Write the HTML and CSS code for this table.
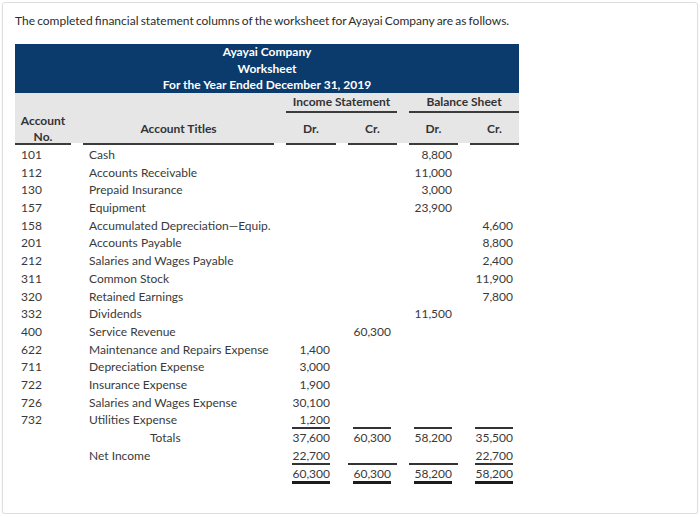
FILE: index.html
```html
<!DOCTYPE html>
<html>
<head>
<meta charset="utf-8">
<link rel="stylesheet" href="styles.css">
</head>
<body>
<div class="card">
  <p class="intro">The completed financial statement columns of the worksheet for Ayayai Company are as follows.</p>
  <div class="sheet">
    <div class="title">
      <div>Ayayai Company</div>
      <div>Worksheet</div>
      <div>For the Year Ended December 31, 2019</div>
    </div>
    <div class="head">
      <div class="h-group is">Income Statement</div>
      <div class="h-group bs">Balance Sheet</div>
      <div class="h-col c1">Account<br>No.</div>
      <div class="h-col c2">Account Titles</div>
      <div class="h-col c3">Dr.</div>
      <div class="h-col c4">Cr.</div>
      <div class="h-col c5">Dr.</div>
      <div class="h-col c6">Cr.</div>
    </div>
    <div class="body">
      <div class="row"><div class="no">101</div><div class="ttl">Cash</div><div class="n"></div><div class="n"></div><div class="n">8,800</div><div class="n"></div></div>
      <div class="row"><div class="no">112</div><div class="ttl">Accounts Receivable</div><div class="n"></div><div class="n"></div><div class="n">11,000</div><div class="n"></div></div>
      <div class="row"><div class="no">130</div><div class="ttl">Prepaid Insurance</div><div class="n"></div><div class="n"></div><div class="n">3,000</div><div class="n"></div></div>
      <div class="row"><div class="no">157</div><div class="ttl">Equipment</div><div class="n"></div><div class="n"></div><div class="n">23,900</div><div class="n"></div></div>
      <div class="row"><div class="no">158</div><div class="ttl">Accumulated Depreciation—Equip.</div><div class="n"></div><div class="n"></div><div class="n"></div><div class="n">4,600</div></div>
      <div class="row"><div class="no">201</div><div class="ttl">Accounts Payable</div><div class="n"></div><div class="n"></div><div class="n"></div><div class="n">8,800</div></div>
      <div class="row"><div class="no">212</div><div class="ttl">Salaries and Wages Payable</div><div class="n"></div><div class="n"></div><div class="n"></div><div class="n">2,400</div></div>
      <div class="row"><div class="no">311</div><div class="ttl">Common Stock</div><div class="n"></div><div class="n"></div><div class="n"></div><div class="n">11,900</div></div>
      <div class="row"><div class="no">320</div><div class="ttl">Retained Earnings</div><div class="n"></div><div class="n"></div><div class="n"></div><div class="n">7,800</div></div>
      <div class="row"><div class="no">332</div><div class="ttl">Dividends</div><div class="n"></div><div class="n"></div><div class="n">11,500</div><div class="n"></div></div>
      <div class="row"><div class="no">400</div><div class="ttl">Service Revenue</div><div class="n"></div><div class="n">60,300</div><div class="n"></div><div class="n"></div></div>
      <div class="row"><div class="no">622</div><div class="ttl">Maintenance and Repairs Expense</div><div class="n">1,400</div><div class="n"></div><div class="n"></div><div class="n"></div></div>
      <div class="row"><div class="no">711</div><div class="ttl">Depreciation Expense</div><div class="n">3,000</div><div class="n"></div><div class="n"></div><div class="n"></div></div>
      <div class="row"><div class="no">722</div><div class="ttl">Insurance Expense</div><div class="n">1,900</div><div class="n"></div><div class="n"></div><div class="n"></div></div>
      <div class="row"><div class="no">726</div><div class="ttl">Salaries and Wages Expense</div><div class="n">30,100</div><div class="n"></div><div class="n"></div><div class="n"></div></div>
      <div class="row"><div class="no">732</div><div class="ttl">Utilities Expense</div><div class="n"><span class="u">1,200</span></div><div class="n"><span class="u">&nbsp;</span></div><div class="n"><span class="u">&nbsp;</span></div><div class="n"><span class="u">&nbsp;</span></div></div>
      <div class="row"><div class="no"></div><div class="ttl totals">Totals</div><div class="n">37,600</div><div class="n">60,300</div><div class="n">58,200</div><div class="n">35,500</div></div>
      <div class="row"><div class="no"></div><div class="ttl">Net Income</div><div class="n"><span class="u">22,700</span></div><div class="n full"></div><div class="n full"></div><div class="n"><span class="u">22,700</span></div></div>
      <div class="row"><div class="no"></div><div class="ttl"></div><div class="n"><span class="uu">60,300</span></div><div class="n"><span class="uu">60,300</span></div><div class="n"><span class="uu">58,200</span></div><div class="n"><span class="uu">58,200</span></div></div>
    </div>
  </div>
</div>
</body>
</html>
```
FILE: styles.css
```css
html, body {
  margin: 0;
  padding: 0;
  background: #fff;
}
body {
  font-family: Lato, "Open Sans", sans-serif;
  font-size: 12px;
  color: #3a3a3a;
}
.card {
  box-sizing: border-box;
  margin: 2px 2px 0 2px;
  width: 696px;
  height: 512px;
  border: 1px solid #dedede;
  border-radius: 3px;
  box-shadow: 0 1px 2px rgba(0, 0, 0, 0.08);
  padding: 10px 12px 0 12px;
}
.intro {
  margin: 0;
  line-height: 15px;
  color: #2c2c2c;
  word-spacing: -0.9px;
}
.sheet {
  width: 504px;
  margin-top: 16px;
}
.title {
  background: #0b3a6c;
  color: #fff;
  font-weight: bold;
  text-align: center;
  height: 49px;
  line-height: 16.6px;
  padding-top: 0;
  box-sizing: border-box;
}
.head, .row {
  display: grid;
  grid-template-columns: 56px 191px 50px 49px 49px 49px;
  column-gap: 12px;
}
.head {
  grid-template-rows: 20px 32px;
  background: linear-gradient(#e6e6e6 0, #e6e6e6 50px, #fff 50px);
  font-weight: bold;
  color: #333;
  text-align: center;
}
.h-group {
  grid-row: 1;
  border-bottom: 2px solid #3c3c3c;
  line-height: 18px;
  box-sizing: border-box;
}
.h-group.is { grid-column: 3 / 5; }
.h-group.bs { grid-column: 5 / 7; }
.h-col {
  grid-row: 2;
  border-bottom: 2px solid #3c3c3c;
  display: flex;
  align-items: center;
  justify-content: center;
  line-height: 15.5px;
  box-sizing: border-box;
  padding-top: 1px;
}
.h-col.c1 { grid-column: 1; }
.h-col.c2 { grid-column: 2; }
.h-col.c3 { grid-column: 3; }
.h-col.c4 { grid-column: 4; }
.h-col.c5 { grid-column: 5; }
.h-col.c6 { grid-column: 6; }
.body {
  padding-top: 1px;
}
.row > div {
  height: 17.7px;
  line-height: 17.7px;
  white-space: nowrap;
}
.no { padding-left: 6px; }
.ttl { padding-left: 6px; }
.ttl.totals { padding-left: 67px; }
.n {
  text-align: right;
  padding-right: 6px;
}
.n.full {
  box-sizing: border-box;
  border-bottom: 2px solid #333;
  height: 18.5px !important;
}
.u, .uu {
  display: inline-block;
  min-width: 38px;
  line-height: 15px;
  text-align: right;
  vertical-align: baseline;
}
.u { border-bottom: 2px solid #333; }
.uu { border-bottom: 3px solid #1c1c1c; }
```
